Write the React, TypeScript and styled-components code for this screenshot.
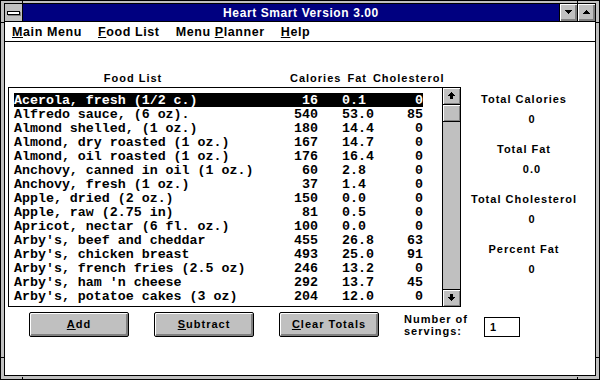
import React from 'react';
import styled, { createGlobalStyle } from 'styled-components';

type Food = { name: string; cal: number; fat: string; chol: number };

const foods: Food[] = [
  { name: 'Acerola, fresh (1/2 c.)', cal: 16, fat: '0.1', chol: 0 },
  { name: 'Alfredo sauce, (6 oz).', cal: 540, fat: '53.0', chol: 85 },
  { name: 'Almond shelled, (1 oz.)', cal: 180, fat: '14.4', chol: 0 },
  { name: 'Almond, dry roasted (1 oz.)', cal: 167, fat: '14.7', chol: 0 },
  { name: 'Almond, oil roasted (1 oz.)', cal: 176, fat: '16.4', chol: 0 },
  { name: 'Anchovy, canned in oil (1 oz.)', cal: 60, fat: '2.8', chol: 0 },
  { name: 'Anchovy, fresh (1 oz.)', cal: 37, fat: '1.4', chol: 0 },
  { name: 'Apple, dried (2 oz.)', cal: 150, fat: '0.0', chol: 0 },
  { name: 'Apple, raw (2.75 in)', cal: 81, fat: '0.5', chol: 0 },
  { name: 'Apricot, nectar (6 fl. oz.)', cal: 100, fat: '0.0', chol: 0 },
  { name: "Arby's, beef and cheddar", cal: 455, fat: '26.8', chol: 63 },
  { name: "Arby's, chicken breast", cal: 493, fat: '25.0', chol: 91 },
  { name: "Arby's, french fries (2.5 oz)", cal: 246, fat: '13.2', chol: 0 },
  { name: "Arby's, ham 'n cheese", cal: 292, fat: '13.7', chol: 45 },
  { name: "Arby's, potatoe cakes (3 oz)", cal: 204, fat: '12.0', chol: 0 },
];

const totals = [
  { label: 'Total Calories', value: '0' },
  { label: 'Total Fat', value: '0.0' },
  { label: 'Total Cholesterol', value: '0' },
  { label: 'Percent Fat', value: '0' },
];

// small pixel arrows, drawn as stacked rects
const Triangle = ({ up }: { up?: boolean }) => {
  const rows = [7, 5, 3, 1];
  const ordered = up ? [...rows].reverse() : rows;
  return (
    <svg width="7" height="4" viewBox="0 0 7 4" shapeRendering="crispEdges">
      {ordered.map((w, i) => (
        <rect key={i} x={(7 - w) / 2} y={i} width={w} height={1} fill="#000" />
      ))}
    </svg>
  );
};

const ScrollArrow = ({ up }: { up?: boolean }) => (
  <svg width="7" height="7" viewBox="0 0 7 7" shapeRendering="crispEdges">
    <g transform={up ? undefined : 'rotate(180 3.5 3.5)'}>
      <rect x="3" y="0" width="1" height="1" fill="#000" />
      <rect x="2" y="1" width="3" height="1" fill="#000" />
      <rect x="1" y="2" width="5" height="1" fill="#000" />
      <rect x="0" y="3" width="7" height="1" fill="#000" />
      <rect x="2" y="4" width="3" height="3" fill="#000" />
    </g>
  </svg>
);

const App: React.FC = () => {
  return (
    <>
      <GlobalStyle />
      <Frame>
        <Notch $x={22} $y={0} $w={1} $h={3} />
        <Notch $x={577} $y={0} $w={1} $h={3} />
        <Notch $x={22} $y={377} $w={1} $h={3} />
        <Notch $x={577} $y={377} $w={1} $h={3} />
        <Notch $x={0} $y={22} $w={4} $h={1} />
        <Notch $x={596} $y={22} $w={4} $h={1} />
        <Notch $x={0} $y={357} $w={4} $h={1} />
        <Notch $x={596} $y={357} $w={4} $h={1} />
        <Window>
          <TitleBar>
            <SysMenuBox>
              <SysBar />
            </SysMenuBox>
            <TitleText>Heart Smart Version 3.00</TitleText>
            <CaptionButton>
              <Triangle />
            </CaptionButton>
            <CaptionButton>
              <Triangle up />
            </CaptionButton>
          </TitleBar>

          <MenuBar>
            <MenuItem><u>M</u>ain Menu</MenuItem>
            <MenuItem><u>F</u>ood List</MenuItem>
            <MenuItem>Menu <u>P</u>lanner</MenuItem>
            <MenuItem><u>H</u>elp</MenuItem>
          </MenuBar>

          <Body>
            <MainArea>
              <ListColumn>
                <HeaderRow>
                  <FoodHead>Food List</FoodHead>
                  <ColHeads>
                    <span>Calories</span>
                    <span>Fat</span>
                    <span>Cholesterol</span>
                  </ColHeads>
                </HeaderRow>
                <ListBox>
                  <Rows>
                    {foods.map((f, i) => (
                      <Row key={f.name} $selected={i === 0}>
                        <span>{f.name}</span>
                        <NumCell>{f.cal}</NumCell>
                        <FatCell>{f.fat}</FatCell>
                        <NumCell>{f.chol}</NumCell>
                      </Row>
                    ))}
                  </Rows>
                  <ScrollBar>
                    <ScrollButton>
                      <ScrollArrow up />
                    </ScrollButton>
                    <Thumb />
                    <Track />
                    <ScrollButton $bottom>
                      <ScrollArrow />
                    </ScrollButton>
                  </ScrollBar>
                </ListBox>
              </ListColumn>

              <TotalsPanel>
                {totals.map((t) => (
                  <TotalGroup key={t.label}>
                    <TotalLabel>{t.label}</TotalLabel>
                    <TotalValue>{t.value}</TotalValue>
                  </TotalGroup>
                ))}
              </TotalsPanel>
            </MainArea>

            <ButtonRow>
              <PushButton><u>A</u>dd</PushButton>
              <PushButton><u>S</u>ubtract</PushButton>
              <PushButton><u>C</u>lear Totals</PushButton>
              <ServingsLabel>
                Number of
                <br />
                servings:
              </ServingsLabel>
              <ServingsInput>1</ServingsInput>
            </ButtonRow>
          </Body>
        </Window>
      </Frame>
    </>
  );
};

export default App;

// Estilos

const GlobalStyle = createGlobalStyle`
  html, body {
    margin: 0;
    padding: 0;
    background: #c0c0c0;
  }
  body {
    font-family: "Liberation Sans", Arial, sans-serif;
  }
  * {
    box-sizing: border-box;
  }
`;

const Frame = styled.div`
  position: relative;
  width: 600px;
  height: 380px;
  background: #c0c0c0;
  border: 1px solid #000;
  padding: 2px 3px 3px 3px;
`;

const Notch = styled.div<{ $x: number; $y: number; $w: number; $h: number }>`
  position: absolute;
  left: ${(p) => p.$x - 1}px;
  top: ${(p) => p.$y - 1}px;
  width: ${(p) => p.$w}px;
  height: ${(p) => p.$h}px;
  background: #000;
`;

const Window = styled.div`
  display: flex;
  flex-direction: column;
  height: 100%;
  border: 1px solid #000;
  background: #fff;
`;

const TitleBar = styled.div`
  display: flex;
  align-items: stretch;
  height: 18px;
  background: #000080;
  border-bottom: 1px solid #000;
`;

const SysMenuBox = styled.div`
  width: 18px;
  background: #c0c0c0;
  border-right: 1px solid #000;
  display: flex;
  align-items: center;
  justify-content: center;
`;

const SysBar = styled.div`
  width: 13px;
  height: 4px;
  background: #fff;
  border: 1px solid #000;
  box-shadow: 1px 1px 0 #808080;
  margin: 1px 1px 0 0;
`;

const TitleText = styled.div`
  flex: 1;
  color: #fff;
  font-weight: bold;
  font-size: 12px;
  letter-spacing: 0.6px;
  display: flex;
  align-items: center;
  justify-content: center;
  padding-left: 20px;
`;

const CaptionButton = styled.div`
  width: 18px;
  background: #c0c0c0;
  border-left: 1px solid #000;
  box-shadow: inset 1px 1px 0 #fff, inset -1px -1px 0 #808080, inset -2px -2px 0 #808080;
  display: flex;
  align-items: center;
  justify-content: center;
  padding: 0 1px 1px 0;
`;

const MenuBar = styled.div`
  display: flex;
  align-items: center;
  gap: 16px;
  height: 20px;
  padding-left: 7px;
  border-bottom: 1px solid #000;
  font-weight: bold;
  font-size: 12.5px;
  letter-spacing: 0.6px;
  color: #000;
`;

const MenuItem = styled.span`
  white-space: nowrap;
`;

const Body = styled.div`
  flex: 1;
  padding: 30px 0 0 3px;
  display: flex;
  flex-direction: column;
`;

const MainArea = styled.div`
  display: flex;
  align-items: flex-start;
`;

const ListColumn = styled.div`
  display: flex;
  flex-direction: column;
  width: 453px;
`;

const HeaderRow = styled.div`
  display: flex;
  height: 12px;
  margin-bottom: 3px;
  font-weight: bold;
  font-size: 11px;
  line-height: 12px;
  letter-spacing: 1px;
`;

const FoodHead = styled.div`
  width: 250px;
  text-align: center;
`;

const ColHeads = styled.div`
  display: flex;
  gap: 6px;
  margin-left: 32px;
`;

const ListBox = styled.div`
  display: flex;
  height: 220px;
  border: 1px solid #000;
`;

const Rows = styled.div`
  flex: 1;
  padding: 5px 0 0 5px;
  font-family: "Liberation Mono", "Courier New", monospace;
  font-weight: bold;
  font-size: 13.3px;
  color: #000;
`;

const Row = styled.div<{ $selected?: boolean }>`
  display: grid;
  grid-template-columns: 248px 56px 64px 41px;
  width: 409px;
  height: 14px;
  line-height: 15px;
  white-space: nowrap;
  background: ${(p) => (p.$selected ? '#000' : 'transparent')};
  color: ${(p) => (p.$selected ? '#fff' : '#000')};
`;

const NumCell = styled.span`
  text-align: right;
`;

const FatCell = styled.span`
  padding-left: 24px;
`;

const ScrollBar = styled.div`
  width: 18px;
  display: flex;
  flex-direction: column;
  border-left: 1px solid #000;
  background: #c0c0c0;
`;

const ScrollButton = styled.div<{ $bottom?: boolean }>`
  height: 17px;
  display: flex;
  align-items: center;
  justify-content: center;
  background: #c0c0c0;
  border-${(p) => (p.$bottom ? 'top' : 'bottom')}: 1px solid #000;
  box-shadow: inset 1px 1px 0 #fff, inset -1px -1px 0 #808080;
  padding: 0 1px 1px 0;
`;

const Thumb = styled.div`
  height: 17px;
  background: #c0c0c0;
  border-bottom: 1px solid #000;
  box-shadow: inset 1px 1px 0 #fff, inset -1px -1px 0 #808080;
`;

const Track = styled.div`
  flex: 1;
  background: #c0c0c0;
`;

const TotalsPanel = styled.div`
  width: 124px;
  margin-left: 1px;
  padding-top: 21px;
  display: flex;
  flex-direction: column;
  gap: 18px;
  font-weight: bold;
  font-size: 11px;
  line-height: 12px;
  letter-spacing: 1px;
`;

const TotalGroup = styled.div`
  display: flex;
  flex-direction: column;
  align-items: center;
  gap: 8px;
`;

const TotalLabel = styled.div`
  white-space: nowrap;
`;

const TotalValue = styled.div`
  padding-left: 16px;
`;

const ButtonRow = styled.div`
  display: flex;
  align-items: flex-start;
  gap: 25px;
  margin: 5px 0 0 21px;
`;

const PushButton = styled.button`
  width: 100px;
  height: 25px;
  padding: 0 0 1px 0;
  background: #c0c0c0;
  border: 1px solid #000;
  border-radius: 2px;
  box-shadow: inset 1px 1px 0 #fff, inset -1px -1px 0 #808080, inset -2px -2px 0 #808080;
  font-family: "Liberation Sans", Arial, sans-serif;
  font-weight: bold;
  font-size: 11px;
  letter-spacing: 1px;
  color: #000;
`;

const ServingsLabel = styled.div`
  margin-top: 1px;
  font-weight: bold;
  font-size: 11px;
  line-height: 12px;
  letter-spacing: 1px;
`;

const ServingsInput = styled.div`
  margin: 5px 0 0 -9px;
  width: 36px;
  height: 20px;
  border: 1px solid #000;
  padding-left: 5px;
  font-weight: bold;
  font-size: 11px;
  line-height: 18px;
`;
